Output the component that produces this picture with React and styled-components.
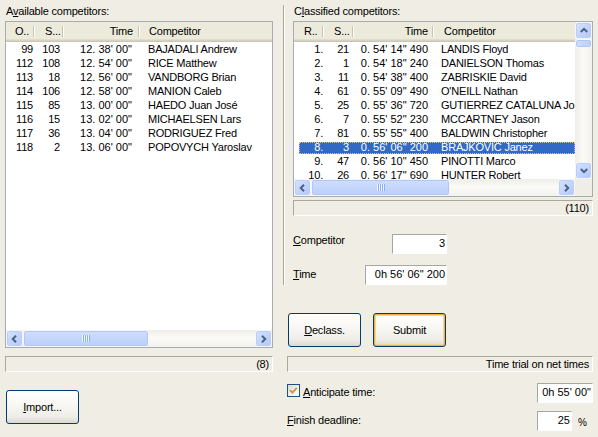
import React from 'react';
import styled, { createGlobalStyle, css } from 'styled-components';

const Global = createGlobalStyle`
  html, body { margin: 0; padding: 0; background: #F0EEE4; }
  #root { width: 598px; height: 437px; }
`;

const Window = styled.div`
  width: 598px;
  height: 437px;
  background: #F0EEE4;
  display: grid;
  grid-template-columns: 283px 315px;
  font-family: "Liberation Sans", Arial, sans-serif;
  font-size: 11px;
  letter-spacing: -0.2px;
  color: #000;
  overflow: hidden;
`;

const LeftPane = styled.div`
  display: flex;
  flex-direction: column;
  padding: 5px 10px 0 5px;
  min-width: 0;
`;

const RightPane = styled.div`
  display: flex;
  flex-direction: column;
  min-width: 0;
`;

const RightTop = styled.div`
  box-sizing: border-box;
  margin-top: 5px;
  height: 280px;
  border-left: 1px solid #ACA899;
  box-shadow: inset 1px 0 #FFFFFF;
  padding: 0 5px 0 9px;
  display: flex;
  flex-direction: column;
`;

const RightBottom = styled.div`
  display: flex;
  flex-direction: column;
  padding: 0 5px 0 4px;
`;

const U = styled.span`
  text-decoration: underline;
  text-underline-offset: 1px;
`;

const GroupLabel = styled.div`
  height: 13px;
  line-height: 13px;
  margin-bottom: 3px;
  padding-left: 1px;
  white-space: nowrap;
`;

const ListFrame = styled.div`
  box-sizing: border-box;
  height: ${p => p.$h}px;
  width: 100%;
  border: 1px solid #A5ACB2;
  background: #FFFFFF;
  display: grid;
  overflow: hidden;
  ${p => p.$vscroll
    ? css`
      grid-template-columns: minmax(0, 1fr) 17px;
      grid-template-rows: minmax(0, 1fr) 17px;
      grid-template-areas: "main v" "h corner";
    `
    : css`
      grid-template-columns: minmax(0, 1fr);
      grid-template-rows: minmax(0, 1fr) 17px;
      grid-template-areas: "main" "h";
    `}
`;

const ListMain = styled.div`
  grid-area: main;
  overflow: hidden;
  min-width: 0;
  min-height: 0;
`;

const HeaderBar = styled.div`
  display: grid;
  grid-template-columns: ${p => p.$cols};
  height: 20px;
  background: #EBEADB;
  box-shadow: inset 0 -1px #CBC7B8, inset 0 -2px #D6D2C2, inset 0 -3px #E2DECD;
`;

const HeadCell = styled.div`
  position: relative;
  line-height: 19px;
  white-space: nowrap;
  overflow: hidden;
  text-align: ${p => p.$align};
  ${p => (p.$align === 'right' ? `padding-right: ${p.$pad}px;` : `padding-left: ${p.$pad}px;`)}
  ${p => p.$sep && css`
    &::after {
      content: '';
      position: absolute;
      right: 1px;
      top: 4px;
      bottom: 5px;
      width: 1px;
      background: #C7C5B2;
      box-shadow: 1px 0 #FFFFFF;
    }
  `}
`;

const Row = styled.div`
  position: relative;
  display: grid;
  grid-template-columns: ${p => p.$cols};
  height: 14px;
  line-height: 14px;
  white-space: nowrap;
  color: ${p => (p.$sel ? '#FFFFFF' : '#000000')};
  ${p => p.$sel && css`
    &::before {
      content: '';
      position: absolute;
      left: 5px;
      right: 0;
      top: 2px;
      bottom: 0;
      box-sizing: border-box;
      background: #316AC5;
      border: 1px dotted #E7C46B;
    }
  `}
`;

const Cell = styled.div`
  position: relative;
  z-index: 1;
  overflow: hidden;
  text-align: ${p => p.$align};
  letter-spacing: ${p => (p.$num ? '0px' : 'inherit')};
  ${p => (p.$align === 'right' ? `padding-right: ${p.$pad}px;` : `padding-left: ${p.$pad}px;`)}
`;

const HTrack = styled.div`
  grid-area: h;
  display: flex;
  height: 17px;
  background: linear-gradient(to bottom, #EEEDE6, #FBFBF8 45%, #F3F1EC);
`;

const VTrack = styled.div`
  grid-area: v;
  display: flex;
  flex-direction: column;
  width: 17px;
  background: linear-gradient(to right, #EEEDE6, #FBFBF8 45%, #F3F1EC);
`;

const Corner = styled.div`
  grid-area: corner;
  background: #EFEDE5;
`;

const ArrowButton = styled.div`
  flex: none;
  width: 17px;
  height: 17px;
  box-sizing: border-box;
  display: flex;
  align-items: center;
  justify-content: center;
  border: 1px solid #F4F7FE;
  border-radius: 3px;
  background: linear-gradient(135deg, #D7E3FD 0%, #C3D5FC 50%, #B4C8F6 100%);
  box-shadow: inset 0 0 0 1px #BCCEF8;
`;

const Thumb = styled.div`
  flex: none;
  box-sizing: border-box;
  ${p => (p.$vertical ? `height: ${p.$size}px;` : `width: ${p.$size}px;`)}
  border: 1px solid #F4F7FE;
  border-radius: 3px;
  background: linear-gradient(${p => (p.$vertical ? 'to right' : 'to bottom')}, #D0DEFD, #BCCFFA);
  box-shadow: inset 0 0 0 1px #B2C6F5;
  display: flex;
  align-items: center;
  justify-content: center;
`;

const Spacer = styled.div`
  flex: 1;
`;

const StatusBar = styled.div`
  box-sizing: border-box;
  height: 16px;
  margin-top: ${p => p.$mt}px;
  border-top: 1px solid #ACA899;
  border-left: 1px solid #ACA899;
  border-right: 1px solid #FFFFFF;
  border-bottom: 1px solid #FFFFFF;
  text-align: right;
  padding-right: 3px;
  line-height: 14px;
  white-space: nowrap;
`;

const Button = styled.button`
  flex: none;
  width: 73px;
  height: 34px;
  box-sizing: border-box;
  margin: 0;
  padding: 0;
  border: 1px solid #003C74;
  border-radius: 3px;
  background: linear-gradient(to bottom, #FFFFFF 0%, #FAF9F5 35%, #EEEDE7 80%, #DCD9CE 100%);
  font: inherit;
  letter-spacing: inherit;
  color: #000;
  ${p => p.$default && css`
    box-shadow: inset 0 0 0 1px #EDAE45, inset 0 0 0 2px #FAD68C;
  `}
`;

const ImportButton = styled(Button)`
  margin-top: 18px;
  margin-left: 1px;
`;

const ButtonRow = styled.div`
  display: flex;
  gap: 12px;
  margin-top: 28px;
  padding-left: 1px;
`;

const FieldRow = styled.div`
  display: flex;
  justify-content: space-between;
  align-items: flex-start;
  width: 154px;
  height: 20px;
  margin-top: ${p => p.$mt}px;
`;

const FieldLabel = styled.div`
  line-height: 13px;
  padding-top: ${p => p.$pt}px;
  white-space: nowrap;
`;

const TextBox = styled.div`
  box-sizing: border-box;
  width: ${p => p.$w}px;
  height: 20px;
  background: #FFFFFF;
  border-top: 1px solid #A7A6A0;
  border-left: 1px solid #A7A6A0;
  border-right: 1px solid #FFFFFF;
  border-bottom: 1px solid #FFFFFF;
  text-align: right;
  padding-right: 1px;
  line-height: 17px;
  letter-spacing: 0px;
  white-space: nowrap;
  overflow: hidden;
`;

const OptionRow = styled.div`
  display: grid;
  grid-template-columns: minmax(0, 1fr) 56px;
  align-items: start;
  height: 20px;
  margin-top: ${p => p.$mt}px;
`;

const OptionLabel = styled.label`
  display: flex;
  align-items: flex-start;
  gap: 3px;
  line-height: 13px;
  white-space: nowrap;
`;

const OptionText = styled.span`
  padding-top: ${p => p.$pt}px;
`;

const CheckBox = styled.span`
  flex: none;
  width: 13px;
  height: 13px;
  margin-top: 1px;
  box-sizing: border-box;
  border: 1px solid #1C5180;
  background: linear-gradient(135deg, #DCDBD5, #FFFFFF);
  display: flex;
  align-items: center;
  justify-content: center;
`;

const InputWithUnit = styled.div`
  display: flex;
  align-items: flex-start;
  gap: 6px;
`;

const Unit = styled.span`
  font-size: 10px;
  line-height: 13px;
  padding-top: 5px;
`;

const ChevronLeft = () => (
  <svg width="7" height="8" viewBox="0 0 7 8"><polyline points="5,0.8 1.8,4 5,7.2" fill="none" stroke="#4D6185" strokeWidth="2" /></svg>
);
const ChevronRight = () => (
  <svg width="7" height="8" viewBox="0 0 7 8"><polyline points="2,0.8 5.2,4 2,7.2" fill="none" stroke="#4D6185" strokeWidth="2" /></svg>
);
const ChevronUp = () => (
  <svg width="8" height="7" viewBox="0 0 8 7"><polyline points="0.8,5 4,1.8 7.2,5" fill="none" stroke="#4D6185" strokeWidth="2" /></svg>
);
const ChevronDown = () => (
  <svg width="8" height="7" viewBox="0 0 8 7"><polyline points="0.8,2 4,5.2 7.2,2" fill="none" stroke="#4D6185" strokeWidth="2" /></svg>
);
const Grip = () => (
  <svg width="8" height="7" viewBox="0 0 8 7">
    {[0, 2, 4, 6].map(x => (
      <g key={x}>
        <rect x={x} y="0" width="1" height="7" fill="#EEF4FE" />
        <rect x={x + 1} y="0" width="1" height="7" fill="#8CB0F8" />
      </g>
    ))}
  </svg>
);
const CheckMark = () => (
  <svg width="9" height="9" viewBox="0 0 9 9"><polyline points="1.2,4.2 3.4,6.6 7.8,1.8" fill="none" stroke="#CB9A34" strokeWidth="1.9" /></svg>
);

const LEFT_COLS = [
  { w: 29, head: 'O..', hAlign: 'left', hPad: 9, dAlign: 'right', dPad: 2 },
  { w: 29, head: 'S...', hAlign: 'left', hPad: 10, dAlign: 'right', dPad: 4 },
  { w: 76, head: 'Time', hAlign: 'right', hPad: 7, dAlign: 'right', dPad: 8, num: true },
  { w: 220, head: 'Competitor', hAlign: 'left', hPad: 9, dAlign: 'left', dPad: 8 },
];

const RIGHT_COLS = [
  { w: 30, head: 'R..', hAlign: 'left', hPad: 10, dAlign: 'right', dPad: 1 },
  { w: 30, head: 'S...', hAlign: 'left', hPad: 10, dAlign: 'right', dPad: 5 },
  { w: 80, head: 'Time', hAlign: 'right', hPad: 6, dAlign: 'right', dPad: 6, num: true },
  { w: 220, head: 'Competitor', hAlign: 'left', hPad: 10, dAlign: 'left', dPad: 7 },
];

const LEFT_ROWS = [
  ['99', '103', `12. 38' 00"`, 'BAJADALI Andrew'],
  ['112', '108', `12. 54' 00"`, 'RICE Matthew'],
  ['113', '18', `12. 56' 00"`, 'VANDBORG Brian'],
  ['114', '106', `12. 58' 00"`, 'MANION Caleb'],
  ['115', '85', `13. 00' 00"`, 'HAEDO Juan José'],
  ['116', '15', `13. 02' 00"`, 'MICHAELSEN Lars'],
  ['117', '36', `13. 04' 00"`, 'RODRIGUEZ Fred'],
  ['118', '2', `13. 06' 00"`, 'POPOVYCH Yaroslav'],
];

const RIGHT_ROWS = [
  ['1.', '21', `0. 54' 14" 490`, 'LANDIS Floyd'],
  ['2.', '1', `0. 54' 18" 240`, 'DANIELSON Thomas'],
  ['3.', '11', `0. 54' 38" 400`, 'ZABRISKIE David'],
  ['4.', '61', `0. 55' 09" 490`, "O'NEILL Nathan"],
  ['5.', '25', `0. 55' 36" 720`, 'GUTIERREZ CATALUNA Joaquim'],
  ['6.', '7', `0. 55' 52" 230`, 'MCCARTNEY Jason'],
  ['7.', '81', `0. 55' 55" 400`, 'BALDWIN Christopher'],
  ['8.', '3', `0. 56' 06" 200`, 'BRAJKOVIC Janez'],
  ['9.', '47', `0. 56' 10" 450`, 'PINOTTI Marco'],
  ['10.', '26', `0. 56' 17" 690`, 'HUNTER Robert'],
];

function ListView({ cols, rows, height, selected = -1, vscroll = false, hThumb }) {
  const template = cols.map(c => `${c.w}px`).join(' ');
  return (
    <ListFrame $h={height} $vscroll={vscroll}>
      <ListMain>
        <HeaderBar $cols={template}>
          {cols.map((c, i) => (
            <HeadCell key={i} $align={c.hAlign} $pad={c.hPad} $sep={i < cols.length - 1}>
              {c.head}
            </HeadCell>
          ))}
        </HeaderBar>
        {rows.map((r, ri) => (
          <Row key={ri} $cols={template} $sel={ri === selected}>
            {r.map((v, ci) => (
              <Cell key={ci} $align={cols[ci].dAlign} $pad={cols[ci].dPad} $num={cols[ci].num}>
                {v}
              </Cell>
            ))}
          </Row>
        ))}
      </ListMain>
      {vscroll && (
        <VTrack>
          <ArrowButton><ChevronUp /></ArrowButton>
          <Thumb $vertical $size={9} />
          <Spacer />
          <ArrowButton><ChevronDown /></ArrowButton>
        </VTrack>
      )}
      <HTrack>
        <ArrowButton><ChevronLeft /></ArrowButton>
        <Thumb $size={hThumb}><Grip /></Thumb>
        <Spacer />
        <ArrowButton><ChevronRight /></ArrowButton>
      </HTrack>
      {vscroll && <Corner />}
    </ListFrame>
  );
}

export default function App() {
  return (
    <>
      <Global />
      <Window>
        <LeftPane>
          <GroupLabel>A<U>v</U>ailable competitors:</GroupLabel>
          <ListView cols={LEFT_COLS} rows={LEFT_ROWS} height={327} hThumb={126} />
          <StatusBar $mt={8}>(8)</StatusBar>
          <ImportButton><U>I</U>mport...</ImportButton>
        </LeftPane>
        <RightPane>
          <RightTop>
            <GroupLabel>C<U>l</U>assified competitors:</GroupLabel>
            <ListView cols={RIGHT_COLS} rows={RIGHT_ROWS} height={177} selected={7} vscroll hThumb={139} />
            <StatusBar $mt={3}>(110)</StatusBar>
            <FieldRow $mt={18}>
              <FieldLabel $pt={0}><U>C</U>ompetitor</FieldLabel>
              <TextBox $w={55}>3</TextBox>
            </FieldRow>
            <FieldRow $mt={11}>
              <FieldLabel $pt={3}><U>T</U>ime</FieldLabel>
              <TextBox $w={82}>0h 56' 06" 200</TextBox>
            </FieldRow>
          </RightTop>
          <RightBottom>
            <ButtonRow>
              <Button><U>D</U>eclass.</Button>
              <Button $default>Submit</Button>
            </ButtonRow>
            <StatusBar $mt={9}>Time trial on net times</StatusBar>
            <OptionRow $mt={11}>
              <OptionLabel>
                <CheckBox><CheckMark /></CheckBox>
                <OptionText $pt={3}><U>A</U>nticipate time:</OptionText>
              </OptionLabel>
              <TextBox $w={56}>0h 55' 00"</TextBox>
            </OptionRow>
            <OptionRow $mt={8}>
              <OptionLabel>
                <OptionText $pt={3}><U>F</U>inish deadline:</OptionText>
              </OptionLabel>
              <InputWithUnit>
                <TextBox $w={35}>25</TextBox>
                <Unit>%</Unit>
              </InputWithUnit>
            </OptionRow>
          </RightBottom>
        </RightPane>
      </Window>
    </>
  );
}
